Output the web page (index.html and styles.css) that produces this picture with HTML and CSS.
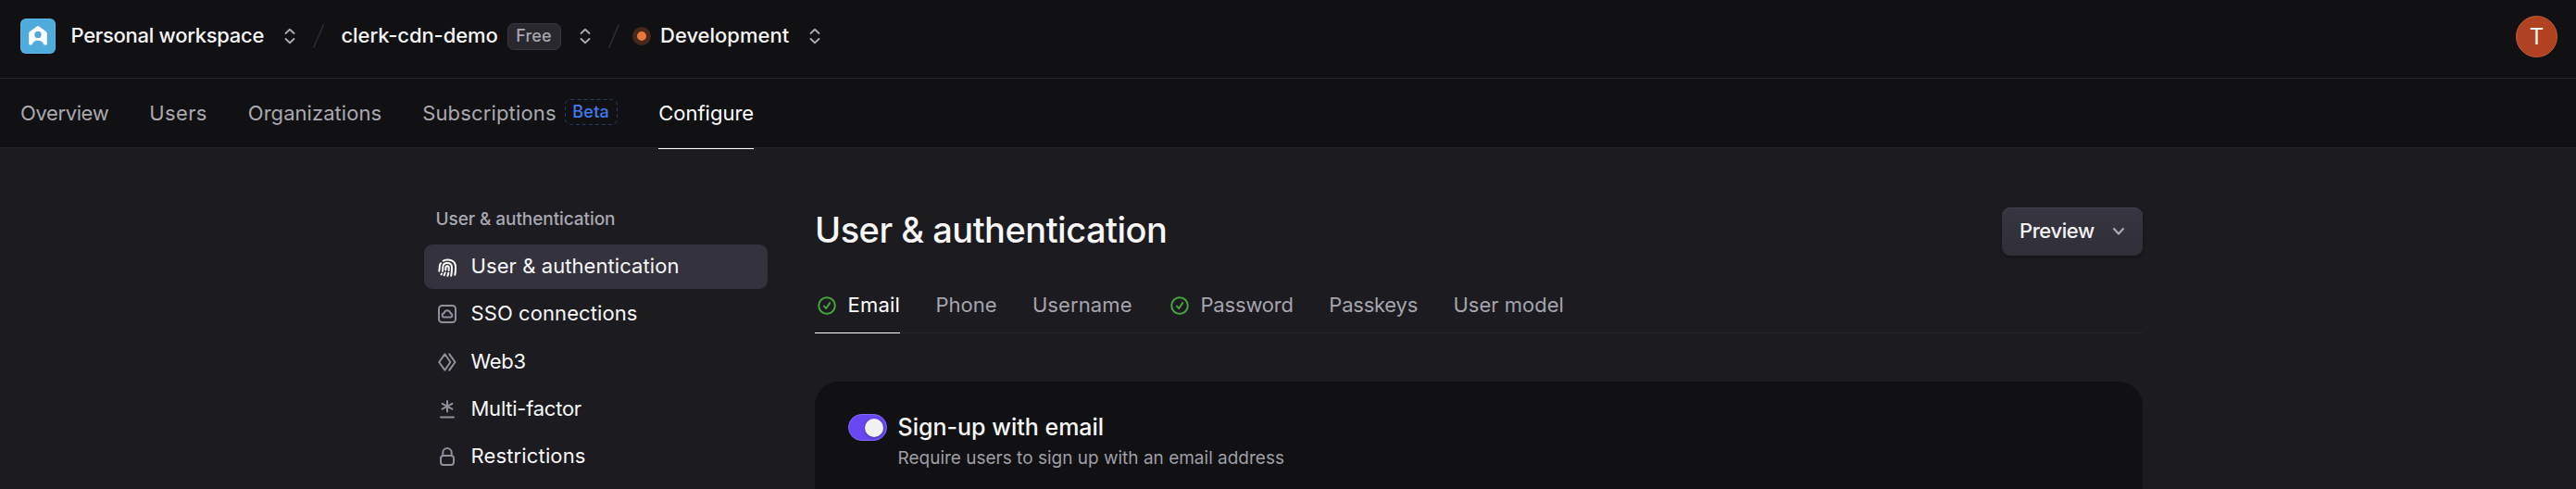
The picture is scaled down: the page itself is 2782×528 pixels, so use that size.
FILE: index.html
```
<!DOCTYPE html>
<html lang="en">
<head>
<meta charset="utf-8">
<title>User &amp; authentication</title>
<link rel="stylesheet" href="styles.css">
</head>
<body>
<header class="topbar">
  <div class="crumb crumb-workspace">
    <svg class="logo" viewBox="0 0 38 38"><rect width="38" height="38" rx="6" fill="#5db6e4"/><rect x="1" y="1" width="36" height="36" rx="5" fill="#4eabdc"/><path fill="#fff" fill-rule="evenodd" d="M17.900 8.500a1.800 1.800 0 0 1 2.200 0l7.600 5.500c.7.5 1.100 1.200 1.100 2V27.500a1 1 0 0 1-1 1H26a1 1 0 0 1-.9-.7c-.9-2.600-3-4-6.100-4s-5.200 1.400-6.100 4a1 1 0 0 1-.9.7h-1.800a1 1 0 0 1-1-1V16c0-.8.400-1.500 1.100-2zM19 13.700a3.700 3.700 0 1 0 0 7.400 3.700 3.700 0 0 0 0-7.400z"/></svg>
    <span class="crumb-name name-workspace">Personal workspace</span>
    <svg class="updown" viewBox="0 0 12 18"><path d="M1.500 6 6 1.800 10.500 6M1.500 12 6 16.200 10.500 12"/></svg>
  </div>
  <svg class="slash" viewBox="0 0 12 26"><path d="M.8 25 11.200 1"/></svg>
  <div class="crumb crumb-app">
    <span class="crumb-name name-app">clerk-cdn-demo</span>
    <span class="badge-free">Free</span>
    <svg class="updown" viewBox="0 0 12 18"><path d="M1.500 6 6 1.800 10.500 6M1.500 12 6 16.200 10.500 12"/></svg>
  </div>
  <svg class="slash" viewBox="0 0 12 26"><path d="M.8 25 11.200 1"/></svg>
  <div class="crumb crumb-env">
    <span class="env-dot"></span>
    <span class="crumb-name name-env">Development</span>
    <svg class="updown" viewBox="0 0 12 18"><path d="M1.500 6 6 1.800 10.500 6M1.500 12 6 16.200 10.500 12"/></svg>
  </div>
  <div class="avatar">T</div>
</header>
<nav class="mainnav">
  <a class="nav-link sp-overview">Overview</a>
  <a class="nav-link sp-users">Users</a>
  <a class="nav-link sp-orgs">Organizations</a>
  <a class="nav-link sp-subs">Subscriptions<span class="badge-beta"><svg class="beta-outline" viewBox="0 0 57 28"><rect x=".5" y=".5" width="56" height="27" rx="6"/></svg>Beta</span></a>
  <a class="nav-link nav-active">Configure</a>
</nav>
<div class="page">
  <aside class="sidebar">
    <h2 class="side-title">User &amp; authentication</h2>
    <ul class="side-list">
      <li class="side-item side-selected sp-w"><svg class="icon" viewBox="0 0 20 20"><path d="M1.200 13.600C2 11.500 1.400 9.300 2 7.400c.2-.8.600-1.500 1-2.100M5.700 2.700C11 .2 19 1.500 19 9.500c0 3.300 0 5.800-.7 8.300M4.800 13.900c.7-1.800.4-3.200.5-4.700.2-2.700 2.200-4.200 4.700-4.200 3 0 5 1.900 5 4.900 0 3.200 0 6-.8 8.900M8.200 12.500c.4-1.300.1-2.200.2-3 .2-.9.800-1.300 1.600-1.300 1 0 1.700.700 1.700 1.700 0 1 0 2-.1 3M11.300 15.700c-.2 1.100-.5 2.100-.9 3.100M7.700 15.500c-.3 1-.7 1.900-1.100 2.700M4 16.600l-.5.900"/></svg><span>User &amp; authentication</span></li>
      <li class="side-item sp-w"><svg class="icon" viewBox="0 0 20 20"><rect x="1" y="1" width="18" height="18" rx="3.500"/><path d="M7 13.500a2.100 2.100 0 0 1-.5-4.200c.5-2 1.700-3.100 3.500-3.100s3 1.100 3.500 3.100a2.100 2.100 0 0 1-.5 4.200z"/></svg><span>SSO connections</span></li>
      <li class="side-item sp-web"><svg class="icon" viewBox="0 0 20 20"><path d="M7.400 1.300 13.400 10l-6 8.700L1.200 10zM12.300 1.300 18.500 10l-6.200 8.700"/></svg><span>Web3</span></li>
      <li class="side-item sp-multi"><svg class="icon" viewBox="0 0 20 20"><path d="M10 1v11.500M4.600 3.800l10.800 5.900M15.400 3.800 4.600 9.700M3 18.500h14"/></svg><span>Multi-factor</span></li>
      <li class="side-item sp-restr"><svg class="icon" viewBox="0 0 20 20"><rect x="3" y="9" width="14" height="10" rx="3"/><path d="M5.300 9V5.700a4.700 4.700 0 0 1 9.400 0V9"/></svg><span>Restrictions</span></li>
    </ul>
  </aside>
  <main class="content">
    <div class="heading">
      <h1 class="title">User &amp; authentication</h1>
      <button class="preview"><span>Preview</span><svg class="caret" viewBox="0 0 14 10"><path d="M2 2l5 5.400L12 2"/></svg></button>
    </div>
    <div class="tabs">
      <a class="tab tab-check tab-active sp-email"><svg class="check" viewBox="0 0 20 20"><circle cx="10" cy="10" r="8.800"/><path d="M7 10.600 9.200 13l4-5.900"/></svg>Email</a>
      <a class="tab">Phone</a>
      <a class="tab sp-username">Username</a>
      <a class="tab tab-check sp-password"><svg class="check" viewBox="0 0 20 20"><circle cx="10" cy="10" r="8.800"/><path d="M7 10.600 9.200 13l4-5.900"/></svg>Password</a>
      <a class="tab sp-passkeys">Passkeys</a>
      <a class="tab">User model</a>
    </div>
    <section class="card">
      <span class="toggle"><span class="knob"></span></span>
      <div class="setting">
        <h3 class="setting-title">Sign-up with email</h3>
        <p class="setting-text">Require users to sign up with an email address</p>
      </div>
    </section>
  </main>
</div>
</body>
</html>
```

FILE: styles.css
```
* { box-sizing: border-box; }
html { height: 100%; overflow: hidden; }
body {
  margin: 0;
  height: 528px;
  overflow: hidden;
  background: #1c1b20;
  color: #f7f7f8;
  font: 400 22px/28px Inter, "Liberation Sans", sans-serif;
}
h1, h2, h3, p, ul { margin: 0; padding: 0; }
svg { display: block; flex: none; fill: none; stroke-linecap: round; stroke-linejoin: round; }

/* Breadcrumb bar */
.topbar {
  display: flex;
  align-items: center;
  height: 85px;
  padding: 0 20px 6px 22px;
  background: #111113;
  border-bottom: 1px solid #252528;
}
.crumb { display: flex; align-items: center; }
.crumb-name { padding-bottom: 2px; font-weight: 500; white-space: nowrap; }
.logo { width: 38px; height: 38px; }
.name-workspace { width: 230px; margin-left: 16.500px; letter-spacing: -.29px; }
.name-app { width: 179px; letter-spacing: -.09px; }
.name-env { width: 161px; margin-left: 10px; }
.updown { width: 12px; height: 18px; stroke: #a9a8b3; stroke-width: 1.900; }
.slash { width: 12px; height: 26px; margin: 0 19px; stroke: #2f2e37; stroke-width: 1.500; }
.badge-free {
  width: 58px;
  height: 29px;
  margin-right: 20.500px;
  border: 1px solid #38373f;
  border-radius: 7px;
  background: #29282f;
  color: #a7a6ae;
  font-size: 18px;
  font-weight: 500;
  line-height: 26px;
  letter-spacing: .2px;
  text-align: center;
}
.crumb-env { margin-left: -5px; }
.env-dot {
  width: 20px;
  height: 20px;
  border: 5px solid #46291c;
  border-radius: 50%;
  background: #e8793a;
}
.avatar {
  width: 45px;
  height: 45px;
  margin-left: auto;
  border: 1px solid #c25a36;
  border-radius: 50%;
  background: #b14221;
  font-size: 24px;
  line-height: 43px;
  text-align: center;
}

/* Primary navigation */
.mainnav {
  display: flex;
  gap: 44px;
  height: 75px;
  padding-left: 22px;
  background: #111113;
  border-bottom: 1px solid #252528;
}
.nav-link { display: flex; align-items: center; height: 74px; color: #a9a8b0; white-space: nowrap; }
.nav-active { height: 76px; padding: 1px 0 2px; color: #fff; border-bottom: 1px solid #fff; }
.badge-beta {
  position: relative;
  width: 57px;
  height: 28px;
  margin: 0 .5px 2px 9px;
  color: #3f7bf0;
  font-size: 18px;
  font-weight: 500;
  line-height: 27px;
  letter-spacing: .25px;
  text-align: center;
}
.beta-outline { position: absolute; inset: 0; stroke: #213a6c; stroke-dasharray: 4 3; stroke-linecap: butt; }

.sp-overview { letter-spacing: -.38px; }
.sp-users { letter-spacing: .35px; }
.sp-orgs { letter-spacing: .05px; }
.sp-subs { letter-spacing: .15px; }
.sp-w { letter-spacing: .08px; }
.sp-web { letter-spacing: -.3px; }
.sp-multi { letter-spacing: -.25px; }
.sp-restr { letter-spacing: .15px; }
.sp-email { letter-spacing: .2px; }
.sp-username { letter-spacing: .1px; }
.sp-password { letter-spacing: -.17px; }
.sp-passkeys { letter-spacing: -.23px; }

/* Page columns */
.page { display: grid; grid-template-columns: 371px 1434px; column-gap: 51px; padding: 62px 0 0 458px; }
.side-title {
  padding: 1px 0 0 12.500px;
  color: #a9a8b0;
  font-size: 19px;
  font-weight: 500;
  line-height: 28px;
  letter-spacing: -.07px;
}
.side-list { display: grid; gap: 3.250px; margin-top: 13px; list-style: none; }
.side-item { display: flex; align-items: center; gap: 15.500px; height: 48px; padding-left: 15px; border-radius: 9px; }
.side-item span { padding-bottom: 2px; }
.side-selected { background: #34333d; }
.icon { width: 20px; height: 20px; stroke: #908f9c; stroke-width: 2; }
.side-selected .icon { margin-top: 1px; stroke: #fff; }

.content { padding-top: 2px; }
.heading { display: flex; align-items: center; justify-content: space-between; height: 52px; }
.title { padding-bottom: 4px; font-size: 38px; font-weight: 500; line-height: 46px; letter-spacing: -.5px; }
.preview {
  display: flex;
  align-items: center;
  justify-content: space-between;
  width: 152px;
  height: 52px;
  padding: 0 19px 0 19px;
  border: 0;
  border-radius: 9px;
  background: linear-gradient(#373640, #302f38);
  box-shadow: inset 0 1px 0 #42414b, 0 2px 4px rgba(0, 0, 0, .3);
  color: #f3f3f5;
  font: 500 22px/28px Inter, "Liberation Sans", sans-serif;
  letter-spacing: -.42px;
}
.preview span { padding-bottom: 2px; }
.caret { width: 14px; height: 10px; stroke: #a9a8b3; stroke-width: 2.200; }

.tabs { display: flex; gap: 38.400px; height: 60px; margin-top: 24px; border-bottom: 1px solid #26252a; }
.tab { display: flex; align-items: center; height: 60px; padding-bottom: 2px; color: #a5a4ad; white-space: nowrap; }
.tab-check { padding-left: 3px; }
.tab-active { color: #fff; border-bottom: 1px solid #fff; padding-bottom: 1px; }
.check { width: 20px; height: 20px; margin: 1px 12.500px 0 0; stroke: #46a33f; stroke-width: 2; }

.card { display: flex; height: 116px; margin-top: 52px; padding: 35px 36px 0; border-radius: 26px 26px 0 0; background: #111113; }
.toggle {
  display: flex;
  align-items: center;
  justify-content: flex-end;
  width: 42px;
  height: 29px;
  padding-right: 3px;
  border: 1px solid #8467fb;
  border-radius: 15px;
  background: #6747f2;
}
.knob { width: 20px; height: 20px; border-radius: 50%; background: #f1f0f3; box-shadow: 0 1px 3px rgba(0, 0, 0, .35); }
.setting { margin-left: 11.500px; }
.setting-title { font-size: 25px; font-weight: 500; line-height: 28px; }
.setting-text { margin-top: 6px; color: #9f9ea7; font-size: 19px; line-height: 28px; }
```
